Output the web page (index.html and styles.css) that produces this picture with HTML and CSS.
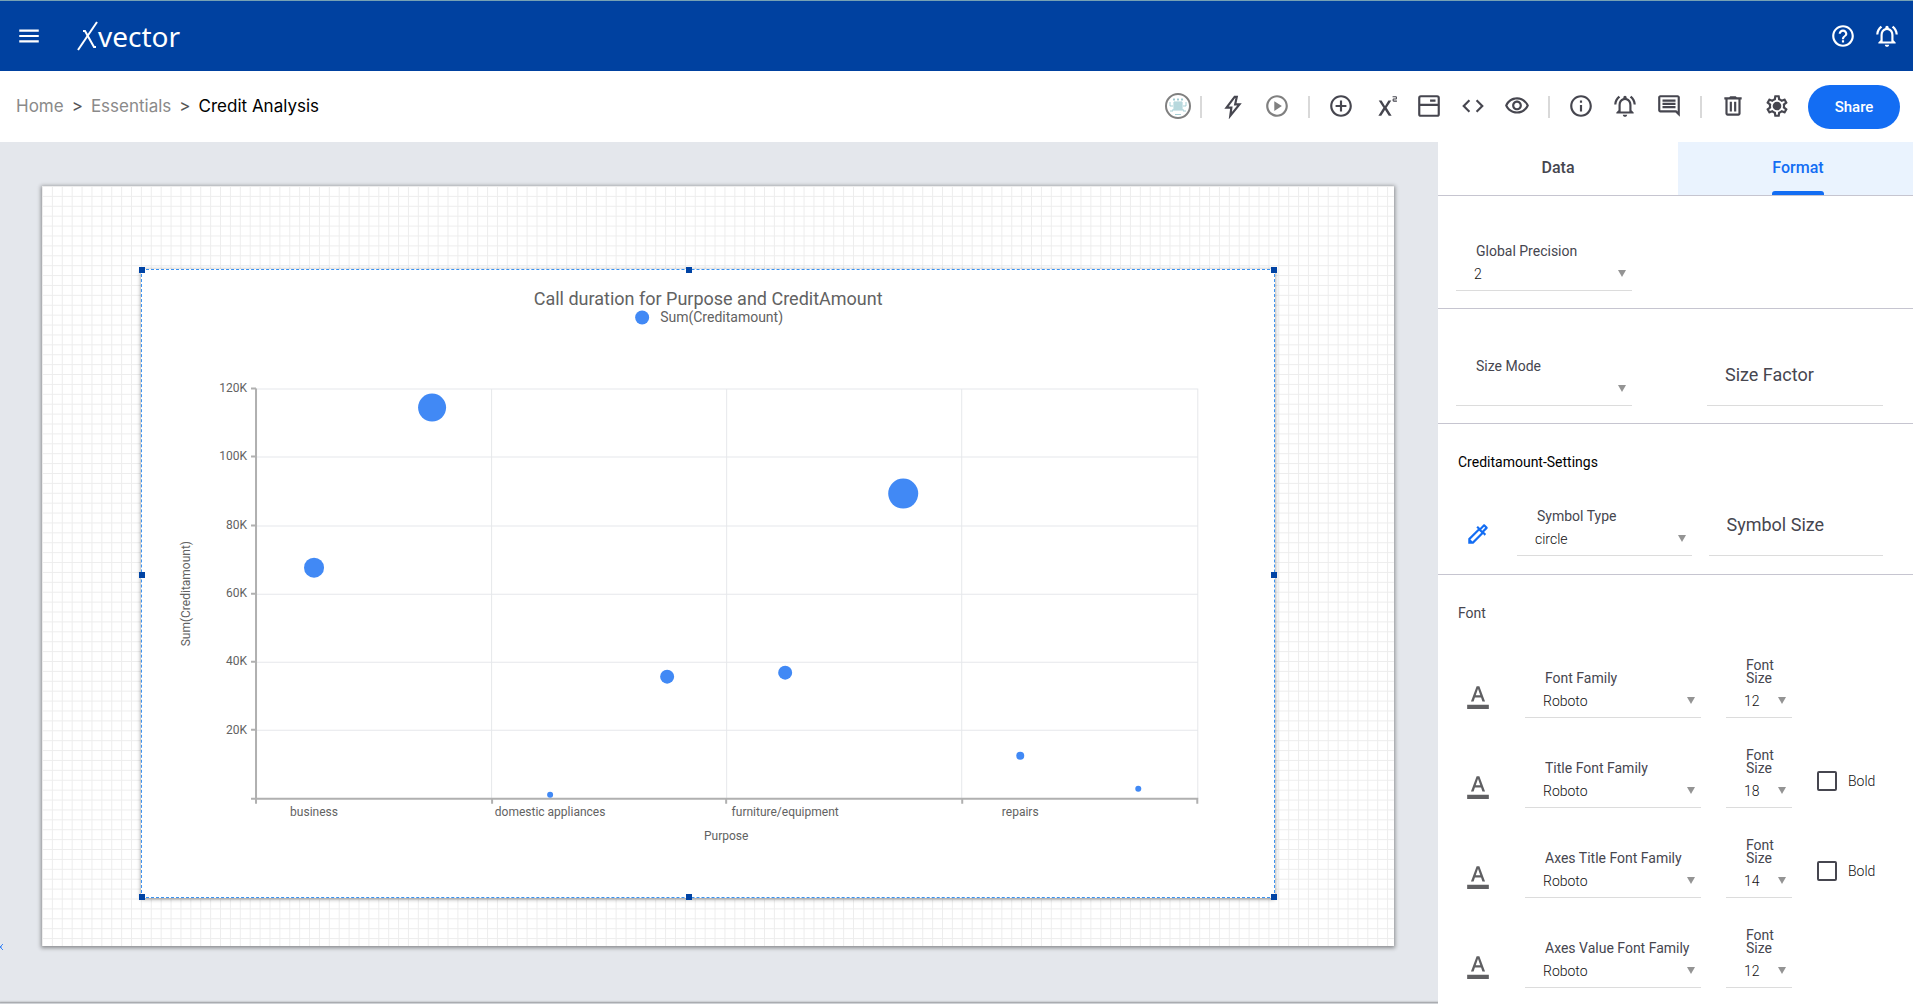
FILE: index.html
```html
<!DOCTYPE html>
<html lang="en">
<head>
    <meta charset="UTF-8">
    <meta name="viewport" content="width=device-width, initial-scale=1.0">
    <title>Credit Analysis</title>
    <link rel="stylesheet" href="styles.css">
</head>
<body>
    <!-- Top bar -->
    <header class="topbar">
        <button type="button" class="icon-btn" aria-label="Menu">
            <svg viewBox="0 0 24 24"><path d="M3 18h18v-2H3v2zm0-5h18v-2H3v2zm0-7v2h18V6H3z"/></svg>
        </button>
        <a href="#" class="logo">
            <svg class="logo-x" viewBox="0 0 21 30" aria-hidden="true"><path d="M1 29 20 1"/><path d="M6 10h2l9 16h2"/></svg>
            <span>vector</span>
        </a>
        <div class="topbar-actions">
            <button type="button" class="icon-btn" aria-label="Help">
                <svg viewBox="0 0 24 24"><path d="M11 18h2v-2h-2v2zm1-16C6.480 2 2 6.480 2 12s4.480 10 10 10 10-4.480 10-10S17.520 2 12 2zm0 18c-4.410 0-8-3.590-8-8s3.590-8 8-8 8 3.590 8 8-3.590 8-8 8zm0-14c-2.210 0-4 1.790-4 4h2c0-1.100.9-2 2-2s2 .9 2 2c0 2-3 1.750-3 5h2c0-2.250 3-2.500 3-5 0-2.210-1.790-4-4-4z"/></svg>
            </button>
            <button type="button" class="icon-btn" aria-label="Notifications">
                <svg viewBox="0 0 24 24"><path d="M12 22c1.100 0 2-.9 2-2h-4c0 1.100.9 2 2 2zm6-6v-5c0-3.070-1.630-5.640-4.500-6.320V4c0-.83-.67-1.500-1.500-1.500s-1.500.67-1.500 1.500v.68C7.640 5.360 6 7.920 6 11v5l-2 2v1h16v-1l-2-2zm-2 1H8v-6c0-2.480 1.510-4.500 4-4.500s4 2.020 4 4.500v6zM7.580 4.080L6.150 2.650C3.750 4.480 2.170 7.300 2.030 10.500h2c.15-2.650 1.510-4.970 3.550-6.420zm12.390 6.420h2c-.15-3.200-1.730-6.020-4.120-7.850l-1.420 1.430c2.020 1.450 3.390 3.770 3.540 6.420z"/></svg>
            </button>
        </div>
    </header>

    <!-- Breadcrumb and page tools -->
    <div class="toolbar">
        <nav class="breadcrumb" aria-label="Breadcrumb">
            <a href="#">Home</a>
            <span>&gt;</span>
            <a href="#">Essentials</a>
            <span>&gt;</span>
            <a href="#" class="current">Credit Analysis</a>
        </nav>
        <div class="tools">
            <button type="button" class="emblem" aria-label="Workspace">
                <svg viewBox="0 0 26 26"><circle cx="13" cy="13" r="12" fill="#fff" stroke="#808080" stroke-width="2"/><g fill="none" stroke="#8fc3ca" stroke-width=".8"><path d="M9 9h8v8H9zM11 9v8M13 9v8M15 9v8M9 11h8M9 13h8M9 15h8"/><path d="M9 5v3M13 5v3M17 5v3M8 6.500h2M12 6.500h2M16 6.500h2M5 9v4h3M21 9v4h-3M5 18h3v-2M21 18h-3v-2M10 21.500h6"/></g></svg>
            </button>
            <span class="divider"></span>
            <button type="button" class="icon-btn" aria-label="Actions">
                <svg viewBox="0 0 24 24"><path class="line" d="M13.500 3.500 6 13.500h4.500L9.500 21l8.500-10.500H14L15.500 3.500z"/></svg>
            </button>
            <button type="button" class="icon-btn muted" aria-label="Run">
                <svg viewBox="0 0 24 24"><path d="M12 2C6.480 2 2 6.480 2 12s4.480 10 10 10 10-4.480 10-10S17.520 2 12 2zm0 18c-4.410 0-8-3.590-8-8s3.590-8 8-8 8 3.590 8 8-3.590 8-8 8zM9.500 16.500l7-4.500-7-4.500z"/></svg>
            </button>
            <span class="divider"></span>
            <button type="button" class="icon-btn" aria-label="Add">
                <svg viewBox="0 0 24 24"><path d="M13 7h-2v4H7v2h4v4h2v-4h4v-2h-4V7zm-1-5C6.480 2 2 6.480 2 12s4.480 10 10 10 10-4.480 10-10S17.520 2 12 2zm0 18c-4.410 0-8-3.590-8-8s3.590-8 8-8 8 3.590 8 8-3.590 8-8 8z"/></svg>
            </button>
            <button type="button" class="icon-btn" aria-label="Formula">
                <svg viewBox="0 0 24 24"><path d="M23 8h-3c-.55 0-1-.45-1-1V6c0-.55.45-1 1-1h2V4h-3V3h3c.55 0 1 .45 1 1v1c0 .55-.45 1-1 1h-2v1h3v1zM5.880 21h2.660l3.400-5.420h.12L15.460 21h2.660l-4.650-7.270L17.810 7h-2.680l-3.070 4.990h-.12L8.850 7H6.190l4.320 6.730L5.880 21z"/></svg>
            </button>
            <button type="button" class="icon-btn" aria-label="Layout">
                <svg viewBox="0 0 24 24"><path class="line" d="M4.500 3h15Q21 3 21 4.500v15q0 1.500-1.500 1.500h-15Q3 21 3 19.500v-15Q3 3 4.500 3zM3 11h18M13 7h5"/></svg>
            </button>
            <button type="button" class="icon-btn" aria-label="Code">
                <svg viewBox="0 0 24 24"><path d="M9.400 16.600L4.800 12l4.600-4.600L8 6l-6 6 6 6 1.400-1.400zm5.200 0l4.600-4.600-4.600-4.600L16 6l6 6-6 6-1.400-1.400z"/></svg>
            </button>
            <button type="button" class="icon-btn" aria-label="Preview">
                <svg viewBox="0 0 24 24"><path d="M12 6c3.790 0 7.170 2.130 8.820 5.500C19.170 14.870 15.790 17 12 17s-7.170-2.130-8.820-5.500C4.830 8.130 8.210 6 12 6m0-2C7 4 2.730 7.110 1 11.500 2.730 15.890 7 19 12 19s9.270-3.110 11-7.500C21.270 7.110 17 4 12 4zm0 5c1.380 0 2.500 1.120 2.500 2.500S13.380 14 12 14s-2.500-1.120-2.500-2.500S10.620 9 12 9m0-2c-2.480 0-4.500 2.020-4.500 4.500S9.520 16 12 16s4.500-2.020 4.500-4.500S14.480 7 12 7z"/></svg>
            </button>
            <span class="divider"></span>
            <button type="button" class="icon-btn" aria-label="Info">
                <svg viewBox="0 0 24 24"><path d="M11 7h2v2h-2zm0 4h2v6h-2zm1-9C6.480 2 2 6.480 2 12s4.480 10 10 10 10-4.480 10-10S17.520 2 12 2zm0 18c-4.410 0-8-3.590-8-8s3.590-8 8-8 8 3.590 8 8-3.590 8-8 8z"/></svg>
            </button>
            <button type="button" class="icon-btn" aria-label="Alerts">
                <svg viewBox="0 0 24 24"><path d="M12 22c1.100 0 2-.9 2-2h-4c0 1.100.9 2 2 2zm6-6v-5c0-3.070-1.630-5.640-4.500-6.320V4c0-.83-.67-1.500-1.500-1.500s-1.500.67-1.500 1.500v.68C7.640 5.360 6 7.920 6 11v5l-2 2v1h16v-1l-2-2zm-2 1H8v-6c0-2.480 1.510-4.500 4-4.500s4 2.020 4 4.500v6zM7.580 4.080L6.150 2.650C3.750 4.480 2.170 7.300 2.030 10.500h2c.15-2.650 1.510-4.970 3.550-6.420zm12.390 6.420h2c-.15-3.200-1.730-6.020-4.120-7.850l-1.420 1.430c2.020 1.450 3.390 3.770 3.540 6.420z"/></svg>
            </button>
            <button type="button" class="icon-btn" aria-label="Comments">
                <svg viewBox="0 0 24 24"><path d="M21.990 4c0-1.100-.89-2-1.990-2H4c-1.100 0-2 .9-2 2v12c0 1.100.9 2 2 2h14l4 4-.01-18zM20 4v13.170L18.830 16H4V4h16zM6 12h12v2H6zm0-3h12v2H6zm0-3h12v2H6z"/></svg>
            </button>
            <span class="divider"></span>
            <button type="button" class="icon-btn" aria-label="Delete">
                <svg viewBox="0 0 24 24"><path d="M15.500 4l-1-1h-5l-1 1H4v2h1v13c0 1.100.9 2 2 2h10c1.100 0 2-.9 2-2V6h1V4h-4.500zM17 19H7V6h10v13zM9 8h2v9H9zm4 0h2v9h-2z"/></svg>
            </button>
            <button type="button" class="icon-btn" aria-label="Settings">
                <svg viewBox="0 0 24 24"><path d="M19.430 12.980c.04-.32.070-.64.070-.98s-.03-.66-.07-.98l2.110-1.650c.19-.15.24-.42.12-.64l-2-3.460c-.09-.16-.26-.25-.44-.25-.06 0-.12.010-.17.030l-2.490 1c-.52-.4-1.080-.73-1.690-.98l-.38-2.650C14.460 2.180 14.250 2 14 2h-4c-.25 0-.46.18-.49.42l-.38 2.650c-.61.25-1.170.59-1.690.98l-2.490-1c-.06-.02-.12-.03-.18-.03-.17 0-.34.090-.43.250l-2 3.460c-.13.22-.07.49.12.64l2.110 1.650c-.04.32-.07.65-.07.98s.03.66.070.98l-2.110 1.650c-.19.15-.24.42-.12.64l2 3.460c.09.16.26.25.44.25.06 0 .12-.01.17-.03l2.490-1c.52.4 1.080.73 1.690.98l.38 2.650c.03.24.24.42.49.42h4c.25 0 .46-.18.49-.42l.38-2.650c.61-.25 1.170-.59 1.690-.98l2.490 1c.06.020.12.030.18.030.17 0 .34-.09.43-.25l2-3.460c.12-.22.070-.49-.12-.64l-2.110-1.650zm-1.980-1.710c.04.31.050.52.050.73 0 .21-.02.43-.05.73l-.14 1.130.89.7 1.080.84-.7 1.210-1.270-.51-1.040-.42-.9.68c-.43.32-.84.56-1.250.73l-1.060.43-.16 1.130-.2 1.350h-1.400l-.19-1.350-.16-1.130-1.060-.43c-.43-.18-.83-.41-1.230-.71l-.91-.7-1.060.43-1.270.51-.7-1.210 1.080-.84.89-.7-.14-1.130c-.03-.31-.05-.54-.05-.74s.02-.43.050-.73l.14-1.130-.89-.7-1.080-.84.7-1.210 1.270.51 1.040.42.9-.68c.43-.32.84-.56 1.250-.73l1.060-.43.16-1.130.2-1.350h1.390l.19 1.350.16 1.130 1.060.43c.43.18.83.41 1.230.71l.91.7 1.060-.43 1.270-.51.7 1.210-1.070.85-.89.7.14 1.130z"/><circle cx="12" cy="12" r="4"/></svg>
            </button>
            <button type="button" class="share">Share</button>
        </div>
    </div>

    <main class="editor">
        <!-- Canvas -->
        <section class="workspace">
            <div class="paper">
                <svg class="paper-grid" viewBox="0 0 1367 768" preserveAspectRatio="none" aria-hidden="true">
                    <defs>
                        <pattern id="grid" width="10" height="10" patternUnits="userSpaceOnUse">
                            <path d="M.5 0v10M0 .5h10" fill="none" stroke="#ededed"/>
                        </pattern>
                    </defs>
                    <rect width="1367" height="768" fill="url(#grid)"/>
                </svg>
                <div class="widget">
                    <svg class="chart" viewBox="1 1 1132 626" role="img" aria-label="Call duration for Purpose and CreditAmount">
                        <g class="gridlines">
                            <path d="M115 119.500h941M115 187.500h941M115 256.500h941M115 324.500h941M115 392.500h941M115 460.500h941M350.500 119v410M585.500 119v410M820.500 119v410M1056.500 119v410"/>
                        </g>
                        <g class="axis">
                            <path d="M115 119v415M110 529h947M110 119h5M110 187h5M110 256h5M110 324h5M110 392h5M110 460h5M351 529v5M585 529v5M821 529v5M1056 529v5"/>
                        </g>
                        <g class="points">
                            <circle cx="501" cy="48" r="7"/>
                            <circle cx="173" cy="298" r="10"/>
                            <circle cx="291" cy="138" r="14"/>
                            <circle cx="409" cy="525" r="3"/>
                            <circle cx="526" cy="407" r="7"/>
                            <circle cx="644" cy="403" r="7"/>
                            <circle cx="762" cy="224" r="15"/>
                            <circle cx="879" cy="486" r="4"/>
                            <circle cx="997" cy="519" r="3"/>
                        </g>
                        <text class="chart-title" x="567" y="35">Call duration for Purpose and CreditAmount</text>
                        <text class="legend" x="519" y="52">Sum(Creditamount)</text>
                        <g class="y-labels">
                            <text x="106" y="122">120K</text>
                            <text x="106" y="190">100K</text>
                            <text x="106" y="259">80K</text>
                            <text x="106" y="327">60K</text>
                            <text x="106" y="395">40K</text>
                            <text x="106" y="464">20K</text>
                        </g>
                        <g class="x-labels">
                            <text x="173" y="546">business</text>
                            <text x="409" y="546">domestic appliances</text>
                            <text x="644" y="546">furniture/equipment</text>
                            <text x="879" y="546">repairs</text>
                            <text x="585" y="570">Purpose</text>
                            <text transform="translate(49 324) rotate(-90)">Sum(Creditamount)</text>
                        </g>
                    </svg>
                    <span class="handle top left"></span>
                    <span class="handle top center"></span>
                    <span class="handle top right"></span>
                    <span class="handle middle left"></span>
                    <span class="handle middle right"></span>
                    <span class="handle bottom left"></span>
                    <span class="handle bottom center"></span>
                    <span class="handle bottom right"></span>
                </div>
            </div>
            <svg class="edge-mark" viewBox="0 0 3 6" aria-hidden="true"><path d="M0 2l1 1-1 1M3 0 1 2v2l2 2" fill="none" stroke="#3d86f5"/></svg>
            <div class="next-page"></div>
        </section>

        <!-- Format panel -->
        <aside class="panel">
            <div class="tabs">
                <button type="button" class="tab">Data</button>
                <button type="button" class="tab active"><span>Format</span></button>
            </div>

            <div class="group split">
                <div class="field">
                    <label for="precision">Global Precision</label>
                    <select id="precision"><option>2</option></select>
                </div>
            </div>

            <div class="group split">
                <div class="field">
                    <label for="size-mode">Size Mode</label>
                    <select id="size-mode"><option></option></select>
                </div>
                <input type="text" class="text-input" placeholder="Size Factor" aria-label="Size Factor">
            </div>

            <div class="group titled">
                <h2>Creditamount-Settings</h2>
                <div class="symbol-row">
                    <button type="button" class="picker" aria-label="Pick color">
                        <svg viewBox="0 0 24 24"><path d="M17.660 5.410l.92.92-2.690 2.690-.92-.92 2.690-2.690M17.670 3c-.26 0-.51.1-.71.290l-3.120 3.120-1.930-1.910-1.410 1.410 1.420 1.420L3 16.250V21h4.750l8.920-8.920 1.420 1.420 1.410-1.410-1.920-1.920 3.120-3.120c.4-.4.4-1.030.010-1.420l-2.340-2.340c-.2-.19-.45-.29-.7-.29zM6.920 19L5 17.080l8.060-8.060 1.920 1.920L6.920 19z"/></svg>
                    </button>
                    <div class="field">
                        <label for="symbol-type">Symbol Type</label>
                        <select id="symbol-type"><option>circle</option></select>
                    </div>
                    <input type="text" class="text-input" placeholder="Symbol Size" aria-label="Symbol Size">
                </div>
            </div>

            <div class="group titled fonts">
                <h3>Font</h3>
                <div class="font-row">
                    <button type="button" class="font-color" aria-label="Font color">
                        <svg viewBox="0 0 24 24"><path d="M2 20h20v4H2v-4zm3.490-3h2.420l1.270-3.580h5.650L16.090 17h2.420L13.250 3h-2.500L5.490 17zm4.420-5.610l2.030-5.790h.12l2.030 5.790H9.910z"/></svg>
                    </button>
                    <div class="field">
                        <label for="font-family">Font Family</label>
                        <select id="font-family"><option>Roboto</option></select>
                    </div>
                    <div class="field">
                        <label for="font-size">Font Size</label>
                        <select id="font-size"><option>12</option></select>
                    </div>
                </div>
                <div class="font-row">
                    <button type="button" class="font-color" aria-label="Title font color">
                        <svg viewBox="0 0 24 24"><path d="M2 20h20v4H2v-4zm3.490-3h2.420l1.270-3.580h5.650L16.090 17h2.420L13.250 3h-2.500L5.490 17zm4.420-5.610l2.030-5.790h.12l2.030 5.790H9.910z"/></svg>
                    </button>
                    <div class="field">
                        <label for="title-family">Title Font Family</label>
                        <select id="title-family"><option>Roboto</option></select>
                    </div>
                    <div class="field">
                        <label for="title-size">Font Size</label>
                        <select id="title-size"><option>18</option></select>
                    </div>
                    <label class="bold"><input type="checkbox">Bold</label>
                </div>
                <div class="font-row">
                    <button type="button" class="font-color" aria-label="Axes title font color">
                        <svg viewBox="0 0 24 24"><path d="M2 20h20v4H2v-4zm3.490-3h2.420l1.270-3.580h5.650L16.090 17h2.420L13.250 3h-2.500L5.490 17zm4.420-5.610l2.030-5.790h.12l2.030 5.790H9.910z"/></svg>
                    </button>
                    <div class="field">
                        <label for="axes-title-family">Axes Title Font Family</label>
                        <select id="axes-title-family"><option>Roboto</option></select>
                    </div>
                    <div class="field">
                        <label for="axes-title-size">Font Size</label>
                        <select id="axes-title-size"><option>14</option></select>
                    </div>
                    <label class="bold"><input type="checkbox">Bold</label>
                </div>
                <div class="font-row">
                    <button type="button" class="font-color" aria-label="Axes value font color">
                        <svg viewBox="0 0 24 24"><path d="M2 20h20v4H2v-4zm3.490-3h2.420l1.270-3.580h5.650L16.090 17h2.420L13.250 3h-2.500L5.490 17zm4.420-5.610l2.030-5.790h.12l2.030 5.790H9.910z"/></svg>
                    </button>
                    <div class="field">
                        <label for="axes-value-family">Axes Value Font Family</label>
                        <select id="axes-value-family"><option>Roboto</option></select>
                    </div>
                    <div class="field">
                        <label for="axes-value-size">Font Size</label>
                        <select id="axes-value-size"><option>12</option></select>
                    </div>
                </div>
            </div>
        </aside>
    </main>
</body>
</html>
```
FILE: styles.css
```css
* {
    box-sizing: border-box;
}
body {
    margin: 0;
    height: 100vh;
    display: flex;
    flex-direction: column;
    overflow: hidden;
    font-family: Roboto, sans-serif;
    font-size: 14px;
    color: #46464f;
    background: #fff;
}
button, input, select {
    font-family: inherit;
    color: inherit;
}
button {
    padding: 0;
    border: none;
    background: none;
    cursor: pointer;
}
svg {
    display: block;
}

/* Top bar */
.topbar {
    display: flex;
    align-items: center;
    flex: none;
    height: 71px;
    padding: 0 4px 0 7px;
    border-top: 1px solid #76a1b4;
    background: #0041a0;
    color: #fff;
}
.topbar-actions {
    display: flex;
    margin-left: auto;
}
.icon-btn {
    display: flex;
    align-items: center;
    justify-content: center;
    width: 44px;
    height: 44px;
}
.icon-btn svg {
    width: 26px;
    height: 26px;
    fill: currentColor;
}
.icon-btn .line {
    fill: none;
    stroke: currentColor;
    stroke-width: 2;
}
.logo {
    display: flex;
    align-items: center;
    margin-left: 26px;
    color: #fff;
    font-family: "Noto Sans", sans-serif;
    font-size: 28px;
    text-decoration: none;
}
.logo-x {
    width: 21px;
    height: 30px;
    fill: none;
    stroke: #fff;
    stroke-width: 2;
}

/* Toolbar */
.toolbar {
    display: flex;
    align-items: center;
    justify-content: space-between;
    flex: none;
    height: 71px;
    padding: 0 13px 0 16px;
}
.breadcrumb {
    display: flex;
    gap: 8px;
    padding-bottom: 2px;
    font-family: Inter, sans-serif;
    font-size: 17px;
    color: #555;
}
.breadcrumb a {
    color: #8a8a8a;
    text-decoration: none;
}
.breadcrumb .current {
    color: #000;
}
.tools {
    display: flex;
    align-items: center;
}
.tools svg {
    margin-bottom: 2px;
}
.divider {
    width: 2px;
    height: 22px;
    margin: 0 9px;
    background: #d9d9d9;
}
.emblem {
    width: 26px;
}
.muted {
    color: #808080;
}
.share {
    width: 92px;
    height: 44px;
    margin-left: 9px;
    border-radius: 22px;
    background: #136df3;
    color: #fff;
    font-size: 15px;
    font-weight: 500;
}

/* Canvas */
.editor {
    display: flex;
    flex: 1;
    min-height: 0;
}
.workspace {
    position: relative;
    flex: 1;
    min-width: 0;
    overflow: hidden;
    padding: 44px 44px 0 42px;
    background: #e4e7ec;
}
.paper {
    position: relative;
    aspect-ratio: 1352 / 760;
    background: #fff;
    box-shadow: 0 1px 4px 1px rgba(0, 0, 0, 0.4);
}
.paper-grid {
    width: 100%;
    height: 100%;
}
/* Widgets sit freely on the paper */
.widget {
    position: absolute;
    left: 7.3%;
    top: 10.9%;
    width: 83.9%;
    height: 82.8%;
    border: 1px dashed #3b92f0;
    background: #fff;
    box-shadow: 0 1px 4px rgba(0, 0, 0, 0.45);
}
.chart {
    width: 100%;
    height: 100%;
}
.handle {
    position: absolute;
    width: 6px;
    height: 6px;
    margin: -3px;
    background: #0043a4;
}
.handle.top {
    top: 0;
}
.handle.middle {
    top: 48.6%;
}
.handle.bottom {
    top: 100%;
}
.handle.left {
    left: 0;
}
.handle.center {
    left: 48.3%;
}
.handle.right {
    left: 100%;
}
.edge-mark {
    position: absolute;
    left: 0;
    bottom: 54px;
    width: 3px;
    height: 6px;
}
.next-page {
    position: absolute;
    left: 0;
    right: 0;
    bottom: 0;
    height: 1px;
    background: #cfd2d6;
    box-shadow: 0 0 2px 1px rgba(0, 0, 0, 0.35);
}

/* Chart */
.chart text {
    font-size: 12px;
    fill: #626262;
}
.chart .chart-title {
    font-size: 18px;
    text-anchor: middle;
}
.chart .legend {
    font-size: 14px;
}
.gridlines {
    stroke: #e6e8eb;
}
.axis {
    fill: none;
    stroke: #b0b0b0;
    stroke-width: 2;
}
.points {
    fill: #4189f5;
}
.y-labels {
    text-anchor: end;
}
.x-labels {
    text-anchor: middle;
}

/* Format panel */
.panel {
    flex: none;
    width: 475px;
    overflow: hidden;
}
.tabs {
    display: flex;
    height: 54px;
    border-bottom: 1px solid #c6c5d0;
}
.tab {
    flex: none;
    width: 240px;
    padding-bottom: 2px;
    font-size: 16px;
    font-weight: 500;
}
.tab.active {
    padding: 0;
    background: #eaf3fe;
    color: #136df3;
}
.tab.active span {
    display: inline-flex;
    flex-direction: column;
    justify-content: space-between;
    height: 53px;
    padding-top: 16px;
}
.tab.active span::after {
    content: "";
    height: 4px;
    border-radius: 3px 3px 0 0;
    background: #136df3;
}
.group {
    padding: 49px 30px 17px 18px;
    border-bottom: 1px solid #c6c5d0;
}
.group.titled {
    padding-top: 28px;
}
.group.fonts {
    border-bottom: none;
}
.split {
    display: flex;
    align-items: flex-end;
    justify-content: space-between;
}
.split .field, .split .text-input {
    width: 176px;
}
h2, h3 {
    margin: 0 0 36px 2px;
    font-size: 14px;
    font-weight: 400;
    line-height: 20px;
}
h2 {
    color: #000;
}
.field {
    position: relative;
    display: flex;
    flex-direction: column;
    border-bottom: 1px solid #dcdcdc;
}
.field label {
    padding: 0 20px;
    font-size: 14px;
    line-height: 13px;
    white-space: nowrap;
}
.field select {
    height: 32px;
    padding: 0 18px 1px;
    border: none;
    background: none;
    appearance: none;
    font-size: 14px;
    font-weight: 300;
    color: #111;
}
.field::after {
    content: "";
    position: absolute;
    right: 6px;
    bottom: 13px;
    border: 4px solid transparent;
    border-top: 7px solid #949494;
    border-bottom: none;
}
.text-input {
    width: 100%;
    height: 48px;
    padding: 0 18px 14px;
    border: none;
    border-bottom: 1px solid #dcdcdc;
    background: none;
    font-size: 18px;
}
.text-input::placeholder {
    color: #46464f;
}
.symbol-row {
    display: grid;
    grid-template-columns: 44px 1fr 1fr;
    align-items: end;
    gap: 17px;
    padding-bottom: 1px;
}
.picker, .font-color {
    display: flex;
    justify-content: center;
    padding-bottom: 9px;
}
.picker {
    color: #136df3;
}
.font-color {
    color: #5f5f62;
}
.picker svg, .font-color svg {
    width: 26px;
    height: 26px;
    fill: currentColor;
}
.font-row {
    display: grid;
    grid-template-columns: 44px 176px 66px auto;
    align-items: end;
    justify-content: start;
    gap: 25px;
    margin-bottom: 31px;
}
.font-row .field:nth-child(3) label {
    white-space: normal;
}
.bold {
    display: flex;
    align-items: center;
    gap: 11px;
    padding-bottom: 17px;
    font-weight: 300;
    color: #111;
}
.bold input {
    width: 20px;
    height: 20px;
    margin: 0;
    border: 2px solid #46464f;
    border-radius: 2px;
    appearance: none;
}
```
